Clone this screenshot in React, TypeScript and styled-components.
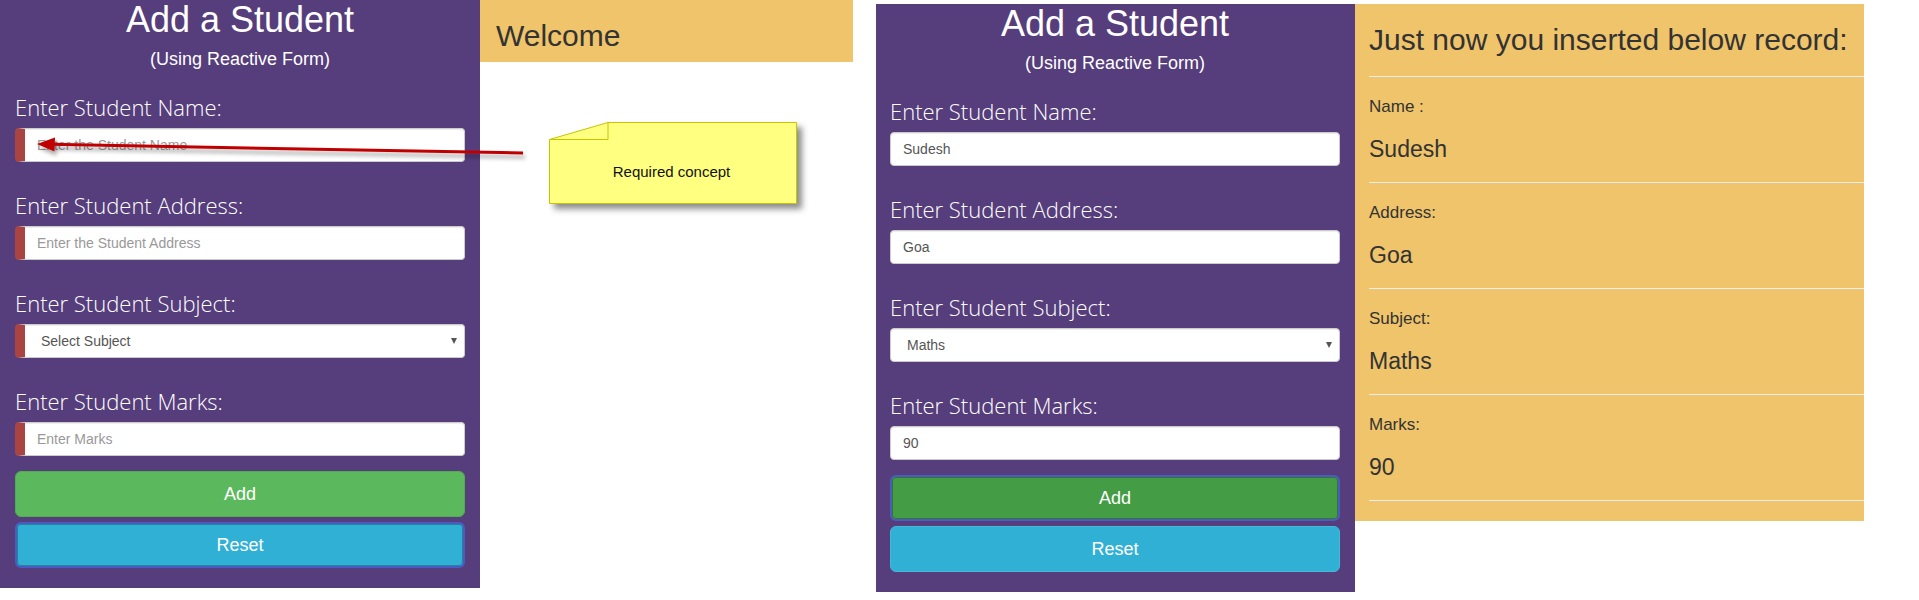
import React from "react";
import styled, { createGlobalStyle, css } from "styled-components";

const PURPLE = "#563d7c";
const GOLD = "#efc46b";
const SANS = `"Liberation Sans", Arial, sans-serif`;

const GlobalStyle = createGlobalStyle`
  html, body { margin: 0; padding: 0; background: #fff; }
  body { font-family: ${SANS}; font-size: 14px; color: #333; }
  *, *::before, *::after { box-sizing: border-box; }
`;

const Page = styled.div`
  display: flex;
  align-items: flex-start;
  gap: 23px;
  width: 1919px;
  height: 600px;
  overflow: hidden;
`;

const Shot = styled.div<{ $offset?: number }>`
  position: relative;
  display: flex;
  align-items: flex-start;
  margin-top: ${(p) => p.$offset ?? 0}px;
`;

const FormPanel = styled.form<{ $width: number; $padLeft: number }>`
  width: ${(p) => p.$width}px;
  height: 588px;
  padding: 0 15px 0 ${(p) => p.$padLeft}px;
  background: ${PURPLE};
  color: #fff;
  display: flex;
  flex-direction: column;
`;

const Title = styled.h1`
  margin: 0;
  font: 400 36px/40px ${SANS};
  text-align: center;
`;

const Subtitle = styled.h4`
  margin: 9px 0 0;
  font: 400 18px/20px ${SANS};
  text-align: center;
`;

const Fields = styled.div`
  display: flex;
  flex-direction: column;
  gap: 28px;
  margin-top: 23px;
`;

const Field = styled.div`
  display: flex;
  flex-direction: column;
  gap: 6px;
`;

const Label = styled.label`
  font: 300 22px/30px "Open Sans", "Segoe UI", sans-serif;
  color: #fff;
`;

const controlBase = css<{ $invalid?: boolean }>`
  display: block;
  width: 100%;
  height: 34px;
  font: 400 14px/20px ${SANS};
  color: #555;
  background: #fff;
  border: 1px solid #ccc;
  border-radius: 4px;
  box-shadow: inset 0 1px 1px rgba(0, 0, 0, 0.075);
  ${(p) =>
    p.$invalid &&
    css`
      border-left: 10px solid #a94442;
    `}
`;

const TextInput = styled.input<{ $invalid?: boolean }>`
  ${controlBase};
  padding: 6px 12px;
  outline: none;
  &::placeholder {
    color: #999;
  }
`;

const SelectBox = styled.div<{ $invalid?: boolean }>`
  ${controlBase};
  display: flex;
  align-items: center;
  justify-content: space-between;
  padding: 0 7px 0 16px;
`;

const Caret = styled.span`
  width: 0;
  height: 0;
  border-left: 3.5px solid transparent;
  border-right: 3.5px solid transparent;
  border-top: 6px solid #555;
`;

const Buttons = styled.div`
  display: flex;
  flex-direction: column;
  gap: 5px;
  margin-top: 15px;
`;

const variants = {
  success: { bg: "#5cb85c", border: "#4cae4c", active: "#449d44" },
  info: { bg: "#31b0d5", border: "#46b8da", active: "#269abc" },
};

const Button = styled.button<{
  $variant: keyof typeof variants;
  $focused?: boolean;
  $pressed?: boolean;
}>`
  display: block;
  width: 100%;
  height: 46px;
  padding: 0 16px;
  font: 400 18px/24px ${SANS};
  color: #fff;
  border-radius: 6px;
  cursor: pointer;
  background: ${(p) => (p.$pressed ? variants[p.$variant].active : variants[p.$variant].bg)};
  border: 1px solid ${(p) => variants[p.$variant].border};
  ${(p) =>
    p.$focused &&
    css`
      border: 2px solid #4a5cc2;
      box-shadow: inset 0 0 0 1px rgba(0, 0, 0, 0.25);
    `}
`;

const WelcomeColumn = styled.div`
  width: 373px;
  display: flex;
  flex-direction: column;
`;

const WelcomeBar = styled.div`
  height: 62px;
  background: ${GOLD};
  padding: 0 16px;
`;

const Heading = styled.h2`
  margin: 0;
  padding-top: 19px;
  font: 400 30px/33px ${SANS};
  color: #333;
  white-space: nowrap;
`;

const RecordPanel = styled.div`
  width: 509px;
  height: 517px;
  background: ${GOLD};
  padding-left: 14px;
  display: flex;
  flex-direction: column;
`;

const Rule = styled.hr`
  margin: 20px 0 0;
  border: 0;
  border-top: 1px solid #eee;
`;

const RecordLabel = styled.div`
  margin-top: 20px;
  font: 400 17px/20px ${SANS};
  color: #333;
`;

const RecordValue = styled.div`
  margin-top: 19px;
  font: 400 23px/26px ${SANS};
  color: #333;
`;

const Overlay = styled.svg`
  position: absolute;
  left: 0;
  top: 0;
  width: 853px;
  height: 588px;
  pointer-events: none;
  overflow: visible;
`;

const Note = styled.div`
  position: absolute;
  left: 549px;
  top: 122px;
  width: 248px;
  height: 82px;
  display: flex;
  align-items: center;
  justify-content: center;
  padding-top: 17px;
`;

const NoteShape = styled.svg`
  position: absolute;
  left: 0;
  top: 0;
  width: 248px;
  height: 82px;
  overflow: visible;
  filter: drop-shadow(5px 5px 3px rgba(0, 0, 0, 0.45));
`;

const NoteText = styled.span`
  position: relative;
  font: 400 15px/18px ${SANS};
  color: #111;
  margin-left: -3px;
`;

type FieldDef = {
  label: string;
  placeholder: string;
  value?: string;
  select?: boolean;
};

const fieldsEmpty: FieldDef[] = [
  { label: "Enter Student Name:", placeholder: "Enter the Student Name" },
  { label: "Enter Student Address:", placeholder: "Enter the Student Address" },
  { label: "Enter Student Subject:", placeholder: "Select Subject", select: true },
  { label: "Enter Student Marks:", placeholder: "Enter Marks" },
];

const fieldsFilled: FieldDef[] = [
  { label: "Enter Student Name:", placeholder: "Enter the Student Name", value: "Sudesh" },
  { label: "Enter Student Address:", placeholder: "Enter the Student Address", value: "Goa" },
  { label: "Enter Student Subject:", placeholder: "Select Subject", value: "Maths", select: true },
  { label: "Enter Student Marks:", placeholder: "Enter Marks", value: "90" },
];

const record = [
  { label: "Name :", value: "Sudesh" },
  { label: "Address:", value: "Goa" },
  { label: "Subject:", value: "Maths" },
  { label: "Marks:", value: "90" },
];

function StudentForm({
  fields,
  invalid,
  width,
  padLeft,
  addPressed,
  resetFocused,
}: {
  fields: FieldDef[];
  invalid: boolean;
  width: number;
  padLeft: number;
  addPressed?: boolean;
  resetFocused?: boolean;
}) {
  return (
    <FormPanel $width={width} $padLeft={padLeft} onSubmit={(e) => e.preventDefault()}>
      <Title>Add a Student</Title>
      <Subtitle>(Using Reactive Form)</Subtitle>
      <Fields>
        {fields.map((f) => (
          <Field key={f.label}>
            <Label>{f.label}</Label>
            {f.select ? (
              <SelectBox $invalid={invalid}>
                <span>{f.value ?? f.placeholder}</span>
                <Caret />
              </SelectBox>
            ) : (
              <TextInput
                $invalid={invalid}
                placeholder={f.placeholder}
                defaultValue={f.value}
              />
            )}
          </Field>
        ))}
      </Fields>
      <Buttons>
        <Button type="button" $variant="success" $pressed={addPressed} $focused={addPressed}>
          Add
        </Button>
        <Button type="button" $variant="info" $focused={resetFocused}>
          Reset
        </Button>
      </Buttons>
    </FormPanel>
  );
}

export default function App() {
  return (
    <>
      <GlobalStyle />
      <Page>
        <Shot>
          <StudentForm fields={fieldsEmpty} invalid width={480} padLeft={15} resetFocused />
          <WelcomeColumn>
            <WelcomeBar>
              <Heading>Welcome</Heading>
            </WelcomeBar>
          </WelcomeColumn>
          <Overlay viewBox="0 0 853 588">
            <defs>
              <filter id="arrowShadow" x="-5%" y="-200%" width="110%" height="500%">
                <feDropShadow dx="2" dy="4" stdDeviation="2" floodColor="#000" floodOpacity="0.35" />
              </filter>
            </defs>
            <g filter="url(#arrowShadow)">
              <line x1="523" y1="153" x2="50" y2="144.3" stroke="#c00000" strokeWidth="3" />
              <polygon points="37,144 55,137.5 54.5,151.5" fill="#c00000" />
            </g>
          </Overlay>
          <Note>
            <NoteShape viewBox="0 0 248 82">
              <polygon
                points="0.5,17.5 59,0.5 247.5,0.5 247.5,81.5 0.5,81.5"
                fill="#ffff80"
                stroke="#c4c400"
                strokeWidth="1"
              />
              <polyline points="59,0.5 59,17.5 0.5,17.5" fill="none" stroke="#c4c400" strokeWidth="1" />
            </NoteShape>
            <NoteText>Required concept</NoteText>
          </Note>
        </Shot>
        <Shot $offset={4}>
          <StudentForm fields={fieldsFilled} invalid={false} width={479} padLeft={14} addPressed />
          <RecordPanel>
            <Heading>Just now you inserted below record:</Heading>
            <Rule />
            {record.map((r) => (
              <React.Fragment key={r.label}>
                <RecordLabel>{r.label}</RecordLabel>
                <RecordValue>{r.value}</RecordValue>
                <Rule />
              </React.Fragment>
            ))}
          </RecordPanel>
        </Shot>
      </Page>
    </>
  );
}
